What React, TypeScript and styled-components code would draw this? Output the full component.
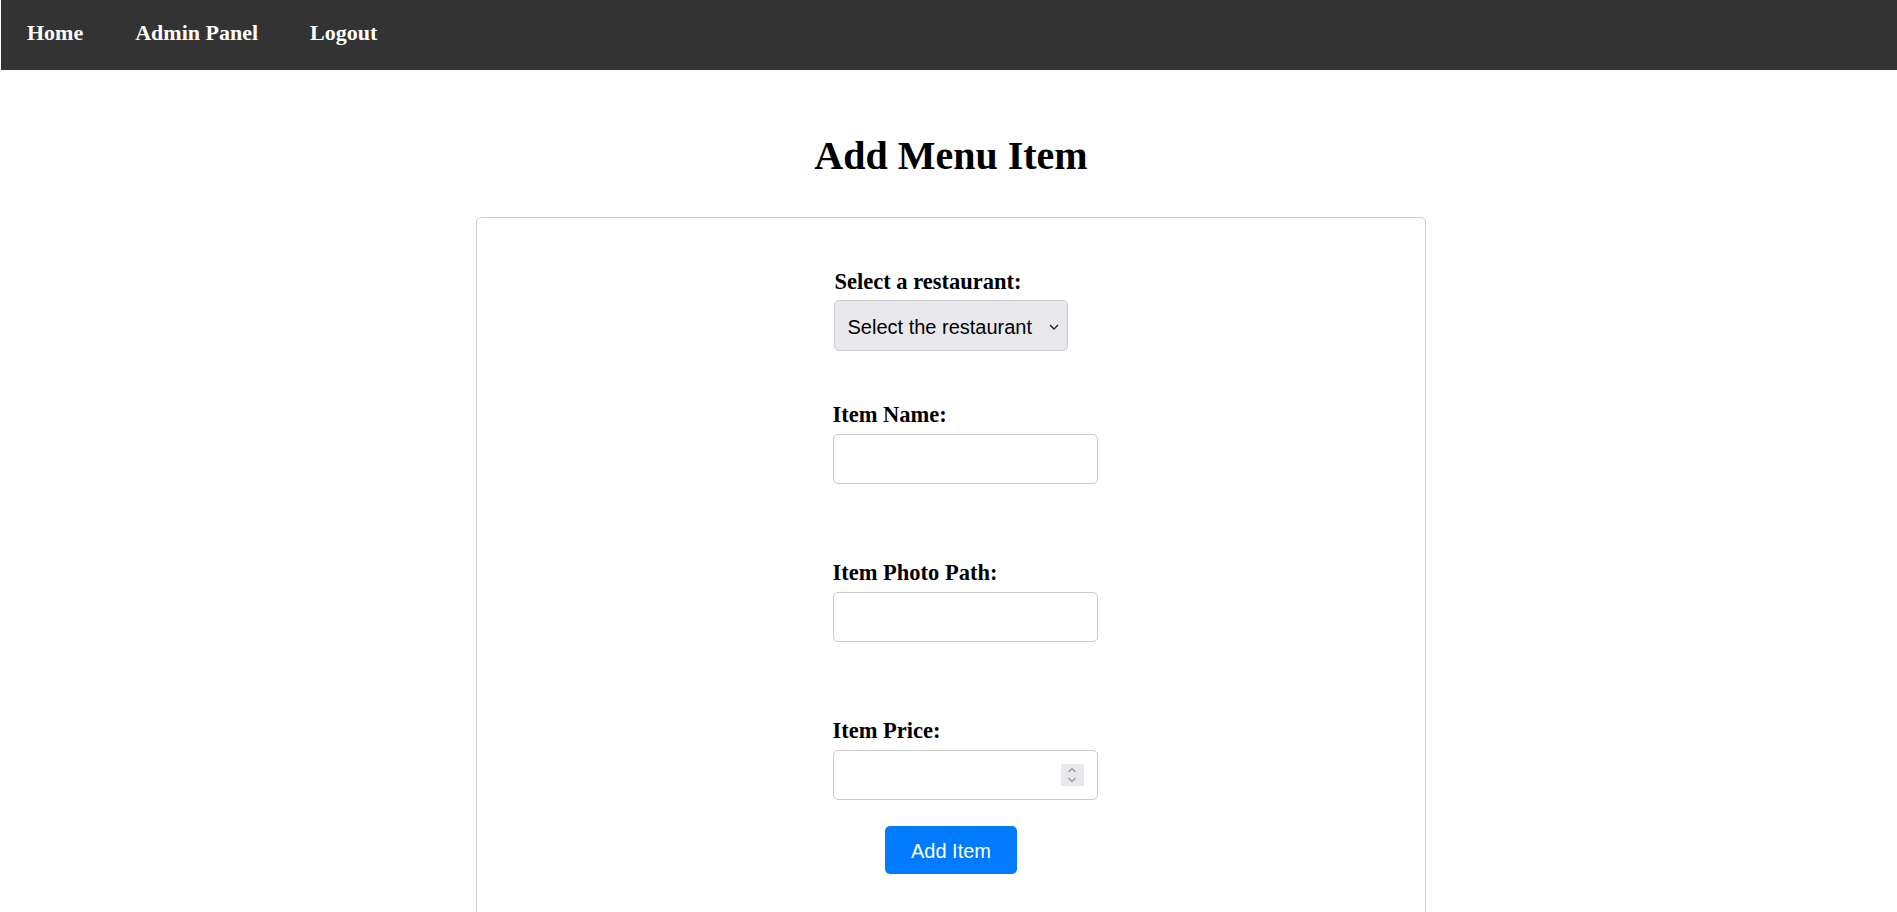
import React from "react";
import styled, { createGlobalStyle } from "styled-components";

const GlobalStyle = createGlobalStyle`
  html, body { margin: 0; padding: 0; background: #fff; }
  body { font-family: "Liberation Serif", "Times New Roman", serif; color: #000; }
  * { box-sizing: border-box; }
`;

const NavBar = styled.nav`
  margin-left: 1px;
  height: 70px;
  background: #333;
  display: flex;
  align-items: flex-start;
  padding-top: 20px;
`;

const NavLink = styled.a`
  padding: 0 26px;
  color: #fff;
  font-weight: bold;
  font-size: 22px;
  line-height: 25px;
  text-decoration: none;
  cursor: pointer;
`;

const Main = styled.main`
  padding-left: 5px;
`;

const Title = styled.h1`
  margin: 64px 0 39px;
  text-align: center;
  font-size: 40px;
  line-height: 44px;
  font-weight: bold;
`;

const Card = styled.div`
  width: 950px;
  margin: 0 auto;
  border: 1px solid #cfcfcf;
  border-radius: 5px;
  padding: 52px 0 60px;
`;

const FormBody = styled.form`
  width: 237px;
  margin: 0 auto;
  display: flex;
  flex-direction: column;
  align-items: flex-start;
`;

const Field = styled.div<{ $gap: number; $shift?: number }>`
  display: flex;
  flex-direction: column;
  align-items: flex-start;
  margin-bottom: ${(p) => p.$gap}px;
  margin-left: ${(p) => p.$shift ?? 0}px;
`;

const Label = styled.label<{ $indent?: number; $space: number }>`
  font-size: 22.5px;
  line-height: 24px;
  font-weight: bold;
  padding-left: ${(p) => p.$indent ?? 0}px;
  margin-bottom: ${(p) => p.$space}px;
  white-space: nowrap;
`;

const ControlWrap = styled.div<{ $w: number }>`
  position: relative;
  width: ${(p) => p.$w}px;
`;

const Select = styled.select`
  appearance: none;
  -webkit-appearance: none;
  width: 234px;
  height: 51px;
  padding: 2px 30px 0 13px;
  background: #e9e9ed;
  border: 1px solid #cbcbcb;
  border-radius: 5px;
  font-family: "Liberation Sans", Arial, sans-serif;
  font-size: 20px;
  color: #000;
  outline: none;
`;

const Chevron = styled.svg`
  position: absolute;
  right: 9px;
  top: 24px;
  width: 10px;
  height: 6px;
  pointer-events: none;
`;

const TextInput = styled.input`
  width: 265px;
  height: 50px;
  padding: 0 13px;
  border: 1px solid #cbcbcb;
  border-radius: 5px;
  font-family: "Liberation Sans", Arial, sans-serif;
  font-size: 20px;
  outline: none;
  background: #fff;
  -moz-appearance: textfield;
  &::-webkit-inner-spin-button,
  &::-webkit-outer-spin-button {
    -webkit-appearance: none;
    margin: 0;
  }
`;

const Spinner = styled.span`
  position: absolute;
  right: 14px;
  top: 14px;
  width: 23px;
  height: 22px;
  background: #e9e9ed;
  display: flex;
  align-items: center;
  justify-content: center;
  pointer-events: none;
`;

const SubmitButton = styled.button`
  align-self: center;
  width: 132px;
  height: 48px;
  margin-top: 26px;
  padding: 3px 0 0;
  border: none;
  border-radius: 5px;
  background: #007bff;
  color: #fff;
  font-family: "Liberation Sans", Arial, sans-serif;
  font-size: 20px;
  cursor: pointer;
`;

export default function App() {
  return (
    <>
      <GlobalStyle />
      <NavBar>
        <NavLink>Home</NavLink>
        <NavLink>Admin Panel</NavLink>
        <NavLink>Logout</NavLink>
      </NavBar>
      <Main>
        <Title>Add Menu Item</Title>
        <Card>
          <FormBody onSubmit={(e) => e.preventDefault()}>
            <Field $gap={52} $shift={1}>
              <Label $indent={1} $space={6}>Select a restaurant:</Label>
              <ControlWrap $w={234}>
                <Select defaultValue="">
                  <option value="">Select the restaurant</option>
                </Select>
                <Chevron viewBox="0 0 10 6">
                  <path d="M1 1 L5 5 L9 1" fill="none" stroke="#222" strokeWidth="1.4" />
                </Chevron>
              </ControlWrap>
            </Field>
            <Field $gap={77}>
              <Label $space={7}>Item Name:</Label>
              <ControlWrap $w={265}>
                <TextInput type="text" />
              </ControlWrap>
            </Field>
            <Field $gap={77}>
              <Label $space={7}>Item Photo Path:</Label>
              <ControlWrap $w={265}>
                <TextInput type="text" />
              </ControlWrap>
            </Field>
            <Field $gap={0}>
              <Label $space={7}>Item Price:</Label>
              <ControlWrap $w={265}>
                <TextInput type="number" />
                <Spinner>
                  <svg width="10" height="16" viewBox="0 0 10 16">
                    <path d="M1.5 5 L5 1.5 L8.5 5" fill="none" stroke="#9a9a9f" strokeWidth="1.3" />
                    <path d="M1.5 11 L5 14.5 L8.5 11" fill="none" stroke="#9a9a9f" strokeWidth="1.3" />
                  </svg>
                </Spinner>
              </ControlWrap>
            </Field>
            <SubmitButton type="submit">Add Item</SubmitButton>
          </FormBody>
        </Card>
      </Main>
    </>
  );
}
